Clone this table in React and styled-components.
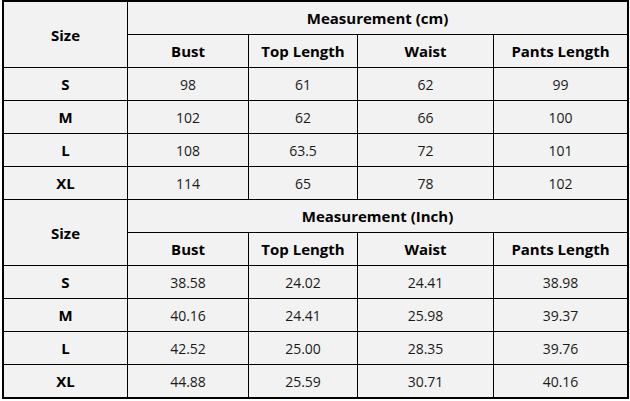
import React from 'react';
import styled, { createGlobalStyle } from 'styled-components';

const GlobalStyle = createGlobalStyle`
    body
    {
        margin: 0;
        background: #ffffff;
        font-family: "Open Sans", "Noto Sans", "DejaVu Sans", sans-serif;
    }
`;

const Wrap = styled.div`
    padding: 0 0 0 2px;
`;

const Table = styled.table`
    border-collapse: separate;
    border-spacing: 0;
    border: 2px solid #000;
    background: #f2f2f2;
    table-layout: fixed;
    width: 627px;
`;

const Col = styled.col`
    width: ${p => p.$w}px;
`;

const Cell = styled.td`
    height: 32px;
    padding: 0;
    text-align: center;
    vertical-align: middle;
    border-right: ${p => (p.$last ? 'none' : '1px solid #000')};
    border-bottom: ${p => (p.$bottom ? 'none' : '1px solid #000')};
    font-size: ${p => (p.$head ? '15px' : '14px')};
    font-weight: ${p => (p.$head ? 700 : 400)};
    color: ${p => (p.$head ? '#000' : '#1a1a1a')};
    white-space: nowrap;
`;

const widths = [124, 121, 109, 136, 133];
const columns = ['Bust', 'Top Length', 'Waist', 'Pants Length'];

const sections = [
    {
        unit: 'cm',
        rows: [
            ['S', '98', '61', '62', '99'],
            ['M', '102', '62', '66', '100'],
            ['L', '108', '63.5', '72', '101'],
            ['XL', '114', '65', '78', '102'],
        ],
    },
    {
        unit: 'Inch',
        rows: [
            ['S', '38.58', '24.02', '24.41', '38.98'],
            ['M', '40.16', '24.41', '25.98', '39.37'],
            ['L', '42.52', '25.00', '28.35', '39.76'],
            ['XL', '44.88', '25.59', '30.71', '40.16'],
        ],
    },
];

function Section({ unit, rows, isLast })
{
    return (
        <tbody>
            <tr>
                <Cell $head rowSpan={2}>Size</Cell>
                <Cell $head $last colSpan={4}>Measurement ({unit})</Cell>
            </tr>
            <tr>
                {columns.map((c, i) => (
                    <Cell key={c} $head $last={i === columns.length - 1}>{c}</Cell>
                ))}
            </tr>
            {rows.map((r, ri) => (
                <tr key={r[0]}>
                    {r.map((v, i) => (
                        <Cell
                            key={i}
                            $head={i === 0}
                            $last={i === r.length - 1}
                            $bottom={isLast && ri === rows.length - 1}
                        >
                            {v}
                        </Cell>
                    ))}
                </tr>
            ))}
        </tbody>
    );
}

function App()
{
    return (
        <Wrap>
            <GlobalStyle />
            <Table>
                <colgroup>
                    {widths.map((w, i) => <Col key={i} $w={w} />)}
                </colgroup>
                {sections.map((s, i) => (
                    <Section key={s.unit} {...s} isLast={i === sections.length - 1} />
                ))}
            </Table>
        </Wrap>
    );
}

export default App;
